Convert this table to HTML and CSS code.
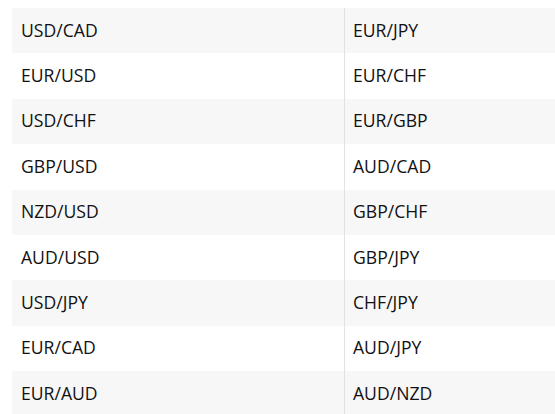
FILE: index.html
```html
<!DOCTYPE html>
<html lang="en">
<head>
<meta charset="utf-8">
<title>Currency pairs</title>
<link rel="stylesheet" href="styles.css">
</head>
<body>
<div class="pairs">
  <div class="row"><div class="cell">USD/CAD</div><div class="cell">EUR/JPY</div></div>
  <div class="row"><div class="cell">EUR/USD</div><div class="cell">EUR/CHF</div></div>
  <div class="row"><div class="cell">USD/CHF</div><div class="cell">EUR/GBP</div></div>
  <div class="row"><div class="cell">GBP/USD</div><div class="cell">AUD/CAD</div></div>
  <div class="row"><div class="cell">NZD/USD</div><div class="cell">GBP/CHF</div></div>
  <div class="row"><div class="cell">AUD/USD</div><div class="cell">GBP/JPY</div></div>
  <div class="row"><div class="cell">USD/JPY</div><div class="cell">CHF/JPY</div></div>
  <div class="row"><div class="cell">EUR/CAD</div><div class="cell">AUD/JPY</div></div>
  <div class="row"><div class="cell">EUR/AUD</div><div class="cell">AUD/NZD</div></div>
</div>
</body>
</html>
```
FILE: styles.css
```css
html, body {
  margin: 0;
  background: #ffffff;
  overflow: hidden;
}
body {
  padding: 8px 0 0 12px;
  font-family: "Open Sans", "Noto Sans", sans-serif;
  font-size: 17.6px;
  color: #111111;
}
.pairs {
  width: 543px;
  display: flex;
  flex-direction: column;
}
.row {
  display: grid;
  grid-template-columns: 332px 1fr;
  height: 45.375px;
}
.row:nth-child(odd) {
  background: #f7f7f8;
}
.cell {
  display: flex;
  align-items: center;
  padding: 0 0 2px 9px;
}
.cell + .cell {
  border-left: 1px solid #e2e2e4;
  padding-left: 8px;
}
```
